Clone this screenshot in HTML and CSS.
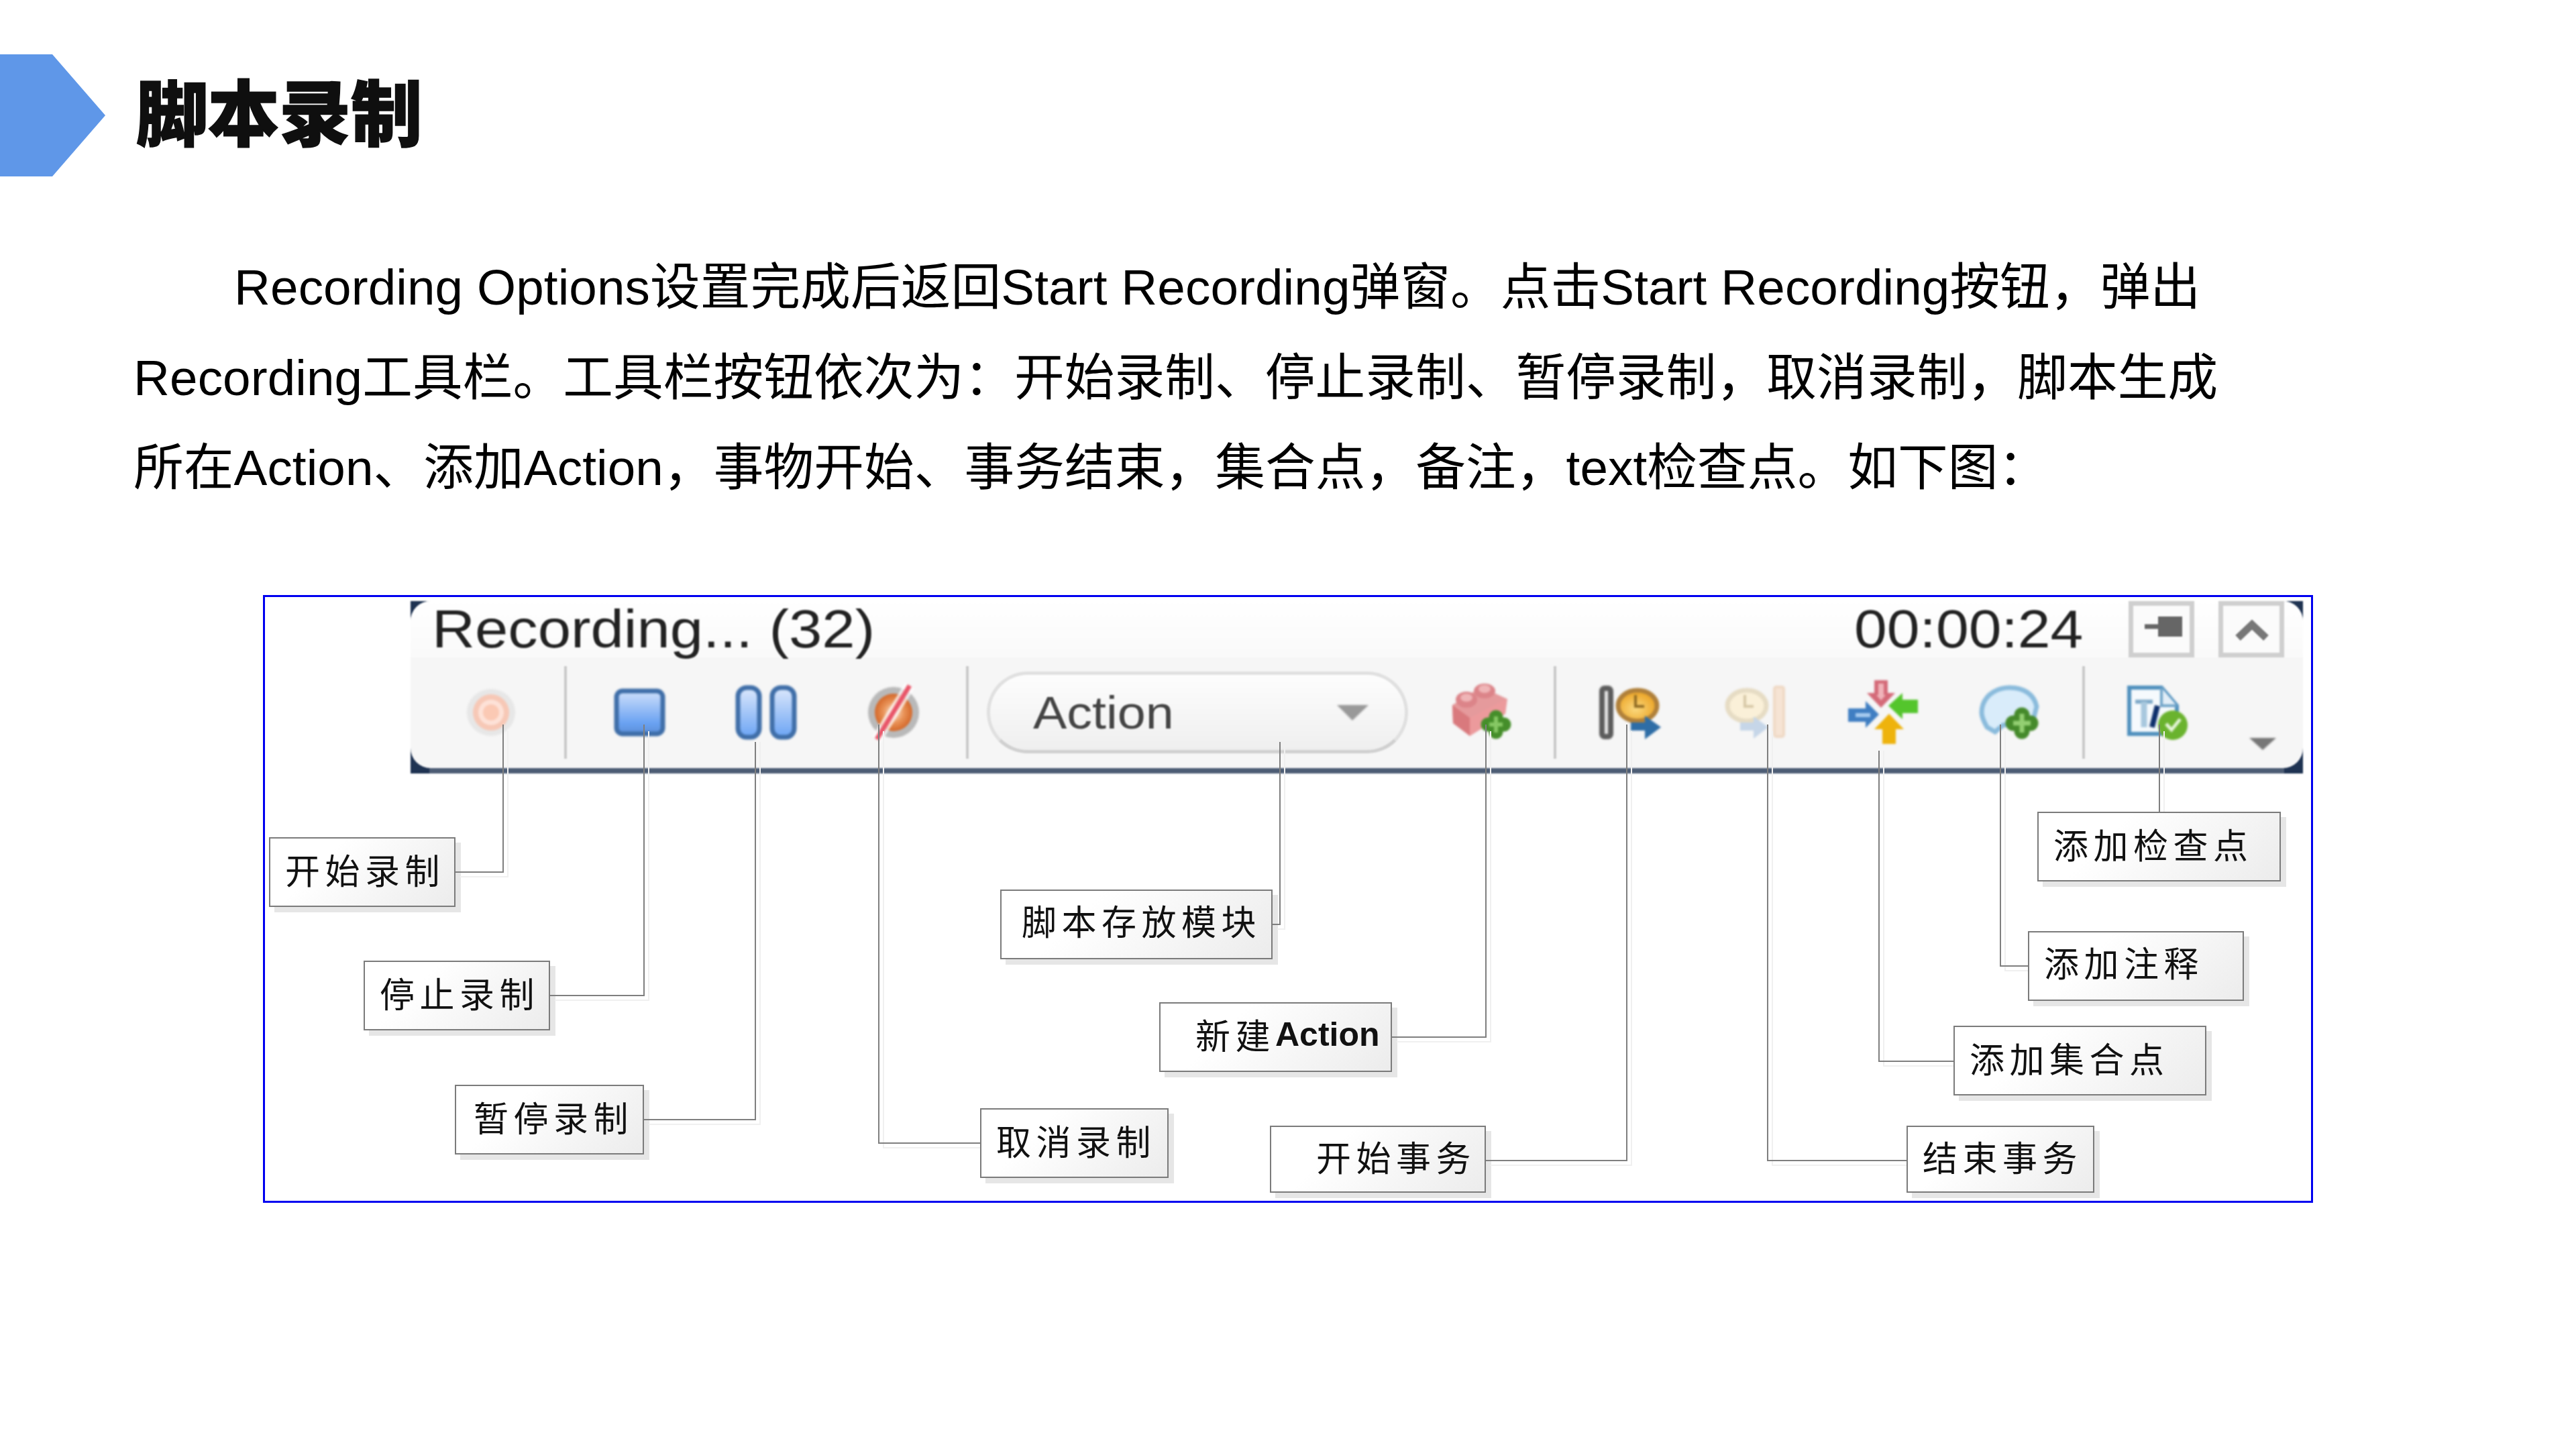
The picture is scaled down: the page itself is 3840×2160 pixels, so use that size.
FILE: index.html
```html
<!DOCTYPE html>
<html lang="zh-CN">
<head>
<meta charset="utf-8">
<title>脚本录制</title>
<link rel="stylesheet" href="styles.css">
</head>
<body>
<main class="slide">
  <header class="head">
    <div class="chevron"></div>
    <h1 class="title">脚本录制</h1>
  </header>
  <p class="intro">Recording Options设置完成后返回Start Recording弹窗。点击Start Recording按钮，弹出<br>Recording工具栏。工具栏按钮依次为：开始录制、停止录制、暂停录制，取消录制，脚本生成<br>所在Action、添加Action，事物开始、事务结束，集合点，备注，text检查点。如下图：</p>

  <figure class="frame">
    <div class="toolbar">
      <div class="tb-inner">
        <div class="tb-title">
          <span class="tb-text tb-rec">Recording... (32)</span>
          <span class="tb-text tb-time">00:00:24</span>
          <span class="win-btn win-pin">
            <svg class="win-ico" viewBox="7 7 84 70"><path d="M24 38h22" stroke="#666" stroke-width="7"/><path d="M44 23h36v30H44z" fill="#666"/></svg>
          </span>
          <span class="win-btn win-up">
            <svg class="win-ico" viewBox="7 7 84 70"><path d="M29 55 50 35l21 20" fill="none" stroke="#777" stroke-width="11"/></svg>
          </span>
        </div>
        <div class="tb-tools">
          <svg class="ic ic-record" viewBox="692 1010 80 105">
            <ellipse cx="732" cy="1062" rx="36" ry="35" fill="#e7e7e7"/>
            <ellipse cx="732" cy="1062" rx="27" ry="27" fill="#f7c8b6"/>
            <ellipse cx="732" cy="1062" rx="19" ry="19" fill="#fde2d8"/>
            <ellipse cx="732" cy="1062" rx="12" ry="12" fill="#fbc9b4"/>
          </svg>
          <i class="sep sep-1"></i>
          <svg class="ic ic-stop" viewBox="912 1010 84 105">
            <defs><linearGradient id="gb" x1="0" y1="0" x2="0" y2="1"><stop offset="0" stop-color="#cfe0fb"/><stop offset=".75" stop-color="#6aa2f2"/><stop offset="1" stop-color="#5b8fd8"/></linearGradient></defs>
            <rect x="919" y="1030" width="69" height="64" rx="9" fill="url(#gb)" stroke="#3f6ea8" stroke-width="7"/>
          </svg>
          <svg class="ic ic-pause" viewBox="1093 1010 99 105">
            <defs><linearGradient id="gp" x1="0" y1="0" x2="0" y2="1"><stop offset="0" stop-color="#dce8fc"/><stop offset="1" stop-color="#6ba4f4"/></linearGradient></defs>
            <rect x="1100" y="1025" width="32" height="74" rx="13" fill="url(#gp)" stroke="#3f6ea8" stroke-width="7"/>
            <rect x="1151" y="1025" width="33" height="74" rx="13" fill="url(#gp)" stroke="#3f6ea8" stroke-width="7"/>
          </svg>
          <svg class="ic ic-cancel" viewBox="1288 1010 87 105">
            <defs><radialGradient id="go"><stop offset="0" stop-color="#fbe6d6"/><stop offset=".55" stop-color="#e99358"/><stop offset="1" stop-color="#d4682a"/></radialGradient></defs>
            <circle cx="1332" cy="1062" r="38" fill="#b9b9b9"/>
            <circle cx="1332" cy="1062" r="28" fill="url(#go)"/>
            <path d="M1356 1022 1307 1102" stroke="#fff" stroke-width="16" opacity=".75"/>
            <path d="M1356 1022 1307 1102" stroke="#e95468" stroke-width="7"/>
          </svg>
          <i class="sep sep-2"></i>
          <div class="combo">
            <span class="tb-text combo-text">Action</span>
            <svg class="combo-arrow" viewBox="0 0 47 23"><path d="M0 0h47L23 23z" fill="#999"/></svg>
          </div>
          <svg class="ic ic-new" viewBox="2160 1010 96 105">
            <path d="M2165 1051 2208 1024 2247 1042 2244 1064 2191 1097 2166 1078z" fill="#e59a9c"/>
            <path d="M2165 1051 2191 1070 2191 1097 2166 1078z" fill="#d9797d"/>
            <path d="M2191 1070 2245 1042 2244 1064 2191 1097z" fill="#ec9a9c"/>
            <ellipse cx="2186" cy="1043" rx="16" ry="12" fill="#dc8489"/>
            <ellipse cx="2213" cy="1030" rx="16" ry="11" fill="#dc8489"/>
            <ellipse cx="2186" cy="1040" rx="9" ry="6" fill="#efb5b7"/>
            <ellipse cx="2213" cy="1027" rx="9" ry="6" fill="#efb5b7"/>
            <path d="M2230 1069v22M2218 1080h24" stroke="#458e2a" stroke-width="21" stroke-linecap="round"/>
            <path d="M2230 1068v24M2220 1080h20" stroke="#86c864" stroke-width="6"/>
          </svg>
          <i class="sep sep-3"></i>
          <svg class="ic ic-begin" viewBox="2380 1010 100 105">
            <defs><radialGradient id="gc" cx=".45" cy=".6"><stop offset="0" stop-color="#fbd97f"/><stop offset="1" stop-color="#eda92e"/></radialGradient></defs>
            <rect x="2388" y="1026" width="13" height="72" rx="4" fill="#e8e8e8" stroke="#5c5c5c" stroke-width="8"/>
            <ellipse cx="2441" cy="1052" rx="29" ry="23" fill="url(#gc)" stroke="#b0803a" stroke-width="7"/>
            <path d="M2438 1036v17h13" fill="none" stroke="#8f6a22" stroke-width="4"/>
            <path d="M2431 1083h24" stroke="#2e6da6" stroke-width="12"/>
            <path d="M2452 1067 2476 1084 2452 1102z" fill="#2e6da6"/>
          </svg>
          <svg class="ic ic-end" viewBox="2570 1010 95 105">
            <ellipse cx="2604" cy="1052" rx="29" ry="23" fill="#faf0d8" stroke="#e6dcc4" stroke-width="7"/>
            <path d="M2601 1036v17h13" fill="none" stroke="#d6c8a6" stroke-width="4"/>
            <path d="M2594 1083h24" stroke="#c6d6e8" stroke-width="12"/>
            <path d="M2614 1068 2636 1084 2614 1101z" fill="#c6d6e8"/>
            <rect x="2645" y="1024" width="14" height="74" rx="3" fill="#f6e4d4" stroke="#efd9c5" stroke-width="4"/>
          </svg>
          <svg class="ic ic-meet" viewBox="2752 1010 108 105">
            <path d="M2804 1055 2783 1033h11v-19h20v19h11z" fill="#d46a78"/>
            <path d="M2804 1044l-7-8h3v-17h8v17h3z" fill="#f0b4ba"/>
            <path d="M2815 1052 2836 1033v10h23v20h-23v9z" fill="#54c52c"/>
            <path d="M2801 1065 2781 1045v11h-26v20h26v9z" fill="#3f7ec2"/>
            <path d="M2766 1066h22" stroke="#a8ccf0" stroke-width="6"/>
            <path d="M2816 1064 2838 1087h-12v22h-20v-22h-12z" fill="#eeb30c"/>
          </svg>
          <svg class="ic ic-note" viewBox="2950 1010 92 105">
            <path d="M2962 1084c-8-14-10-22-6-34 6-16 22-25 40-25 21 0 36 10 40 28l-6 24-44 4-12 10z" fill="#d9ecfa" stroke="#8abbdc" stroke-width="7"/>
            <path d="M3014 1066v24M3001 1078h26" stroke="#458a2b" stroke-width="23" stroke-linecap="round"/>
            <path d="M3014 1064v28M3001 1078h26" stroke="#93cf72" stroke-width="7"/>
          </svg>
          <i class="sep sep-4"></i>
          <svg class="ic ic-doc" viewBox="3168 1010 96 105">
            <path d="M3174 1025h48l23 27v42h-71z" fill="#f6fafd" stroke="#4e8fbd" stroke-width="6"/>
            <path d="M3222 1025v27h23" fill="#e3eef7" stroke="#6ea3c8" stroke-width="4"/>
            <path d="M3183 1046h26" stroke="#7ea9c8" stroke-width="6"/>
            <path d="M3196 1046v38" stroke="#a8c8de" stroke-width="9"/>
            <path d="M3216 1052 3208 1084" stroke="#0d2f6b" stroke-width="8"/>
            <circle cx="3239" cy="1081" r="22" fill="#6ab32e"/>
            <path d="M3229 1079 3237 1088 3250 1072" fill="none" stroke="#e6f5da" stroke-width="5"/>
          </svg>
          <svg class="ic-more" viewBox="0 0 40 18"><path d="M0 0h40L20 18z" fill="#777"/></svg>
        </div>
      </div>
    </div>

    <div class="node n-start">开始录制</div>
    <div class="node n-stop">停止录制</div>
    <div class="node n-pause">暂停录制</div>
    <div class="node n-cancel">取消录制</div>
    <div class="node n-script">脚本存放模块</div>
    <div class="node n-new">新建<b class="node-en">Action</b></div>
    <div class="node n-begin">开始事务</div>
    <div class="node n-end">结束事务</div>
    <div class="node n-meet">添加集合点</div>
    <div class="node n-note">添加注释</div>
    <div class="node n-check">添加检查点</div>

    <svg class="wires" viewBox="392 887 3056 906" aria-hidden="true">
      <g class="wire-shadow">
        <path d="M757 1090V1307H686"/>
        <path d="M967 1090V1491H827"/>
        <path d="M1133 1106V1676H967"/>
        <path d="M1317 1090V1711H1461"/>
        <path d="M1915 1106V1385H1904"/>
        <path d="M2222 1090V1553H2082"/>
        <path d="M2432 1090V1737H2222"/>
        <path d="M2642 1090V1737H2842"/>
        <path d="M2808 1119V1589H2912"/>
        <path d="M2989 1090V1447H3023"/>
        <path d="M3226 1090V1210"/>
      </g>
      <g class="wire">
        <path d="M750 1080V1300H679"/>
        <path d="M960 1080V1484H820"/>
        <path d="M1126 1106V1669H960"/>
        <path d="M1310 1080V1704H1461"/>
        <path d="M1908 1106V1378H1897"/>
        <path d="M2215 1080V1546H2075"/>
        <path d="M2425 1080V1730H2215"/>
        <path d="M2635 1080V1730H2842"/>
        <path d="M2801 1119V1582H2912"/>
        <path d="M2982 1080V1440H3023"/>
        <path d="M3219 1080V1210"/>
      </g>
    </svg>
  </figure>
</main>
</body>
</html>
```
FILE: styles.css
```css
* { box-sizing: border-box; }
html, body { margin: 0; padding: 0; background: #fff; }
.slide {
  width: 3840px;
  height: 2160px;
  padding-top: 81px;
  font-family: "Liberation Sans", "Noto Sans CJK SC", sans-serif;
  color: #000;
}

/* heading */
.head {
  display: flex;
  align-items: center;
  height: 182px;
}
.chevron {
  width: 157px;
  height: 182px;
  background: #5f97e8;
  clip-path: polygon(0 0, 78px 0, 100% 50%, 78px 100%, 0 100%);
}
.title {
  margin: 0 0 18px 46px;
  font-family: "Noto Sans CJK SC", sans-serif;
  font-size: 106.67px;
  font-weight: 900;
  line-height: 1.2;
  color: #0f0f0f;
  -webkit-text-stroke: 1.5px #0f0f0f;
}

/* paragraph */
.intro {
  margin: 98px 0 0 199px;
  width: 3300px;
  font-size: 74.67px;
  line-height: 134.6px;
  letter-spacing: .1px;
  text-indent: 150px;
  white-space: nowrap;
}

/* diagram */
.frame {
  position: relative;
  margin: 122px 0 0 392px;
  width: 3056px;
  height: 906px;
  border: 3px solid #0000f0;
  background: #fff;
}
.wires {
  position: absolute;
  left: -3px;
  top: -3px;
  width: 3056px;
  height: 906px;
  pointer-events: none;
}
.wires path { fill: none; }
.wire-shadow path { stroke: #f0f0f0; stroke-width: 2; }
.wire path { stroke: #7f7f7f; stroke-width: 2; }

/* toolbar image */
.toolbar {
  position: absolute;
  left: 217px;
  top: 6px;
  width: 2821px;
  height: 257px;
  background: #1f3352;
  filter: blur(1.3px);
}
.toolbar::after {
  content: "";
  position: absolute;
  left: 28px;
  right: 28px;
  bottom: 0;
  height: 8px;
  background: #4d5d75;
}
.tb-inner {
  display: flex;
  flex-direction: column;
  height: 249px;
  border-radius: 30px;
  background: #f6f6f6;
}
.tb-title {
  display: flex;
  align-items: center;
  height: 84px;
  flex: none;
  border-radius: 30px 30px 0 0;
  background: linear-gradient(#fff, #fafafa);
}
.tb-text {
  display: block;
  flex: none;
  font-family: "Liberation Sans", sans-serif;
  line-height: 1;
  transform-origin: left center;
  transform: scaleX(1.11);
  white-space: nowrap;
}
.tb-rec {
  margin-left: 32px;
  margin-right: auto;
  font-size: 79px;
  color: #222;
  transform: scaleX(1.122);
}
.tb-time { margin-right: 101px; font-size: 79px; color: #222; }
.win-btn {
  display: block;
  flex: none;
  width: 98px;
  height: 84px;
  border: 7px solid #cfcfcf;
  background: #fbfbfb;
}
.win-up { margin-left: 36px; margin-right: 28px; }
.win-ico { display: block; width: 84px; height: 70px; }

.tb-tools {
  display: flex;
  align-items: center;
  flex: 1;
}
.ic { display: block; flex: none; height: 105px; filter: blur(1px); }
.ic-record { width: 80px;  margin-left: 80px; }
.sep { display: block; flex: none; width: 4px; height: 138px; background: #c9c9c9; }
.sep-1 { margin-left: 69px; }
.ic-stop { width: 84px; margin-left: 67px; }
.ic-pause { width: 99px; margin-left: 97px; }
.ic-cancel { width: 87px; margin-left: 96px; }
.sep-2 { margin-left: 65px; }
.combo {
  display: flex;
  align-items: center;
  justify-content: space-between;
  flex: none;
  width: 628px;
  height: 122px;
  margin-left: 27px;
  padding: 0 54px 0 64px;
  border: 5px solid #e0e0e0;
  border-bottom-color: #d0d0d0;
  border-radius: 61px;
  background: linear-gradient(#fdfdfd, #efefef);
}
.combo-text { font-size: 68px; color: #444; }
.combo-arrow { display: block; width: 47px; height: 23px; filter: blur(1px); }
.ic-new { width: 96px; margin-left: 61px; }
.sep-3 { margin-left: 60px; }
.ic-begin { width: 100px; margin-left: 60px; }
.ic-end { width: 95px; margin-left: 90px; }
.ic-meet { width: 108px; margin-left: 87px; }
.ic-note { width: 92px; margin-left: 90px; }
.sep-4 { margin-left: 62px; }
.ic-doc { width: 96px; margin-left: 60px; }
.ic-more { display: block; flex: none; width: 40px; height: 18px; margin: 94px 0 0 89px; filter: blur(1px); }

/* labels */
.node {
  position: absolute;
  display: flex;
  align-items: center;
  padding-left: 22px;
  padding-bottom: 7px;
  height: 104px;
  border: 2px solid #7b7b7b;
  background: linear-gradient(135deg, #fff 30%, #ececec 100%);
  box-shadow: 8px 8px 0 #e6e6e6;
  font-family: "Noto Sans CJK SC", sans-serif;
  font-size: 52px;
  letter-spacing: 7.5px;
  line-height: 1;
  color: #111;
  white-space: nowrap;
}
.node-en {
  font-family: "Liberation Sans", sans-serif;
  font-weight: 700;
  font-size: 50px;
  letter-spacing: 0;
}
.n-start  { left: 6px;    top: 358px;  width: 278px; }
.n-stop   { left: 147px;  top: 542px;  width: 278px; }
.n-pause  { left: 283px;  top: 727px;  width: 282px; padding-left: 26px; }
.n-cancel { left: 1066px; top: 762px;  width: 281px; }
.n-script { left: 1096px; top: 436px;  width: 406px; padding-left: 30px; padding-bottom: 11px; }
.n-new    { left: 1333px; top: 604px;  width: 347px; padding-left: 52px; }
.n-begin  { left: 1498px; top: 788px;  width: 322px; height: 100px; padding-left: 67px; }
.n-end    { left: 2447px; top: 788px;  width: 280px; height: 100px; }
.n-meet   { left: 2517px; top: 639px;  width: 377px; }
.n-note   { left: 2628px; top: 498px;  width: 322px; padding-bottom: 11px; }
.n-check  { left: 2642px; top: 320px;  width: 363px; }
```
